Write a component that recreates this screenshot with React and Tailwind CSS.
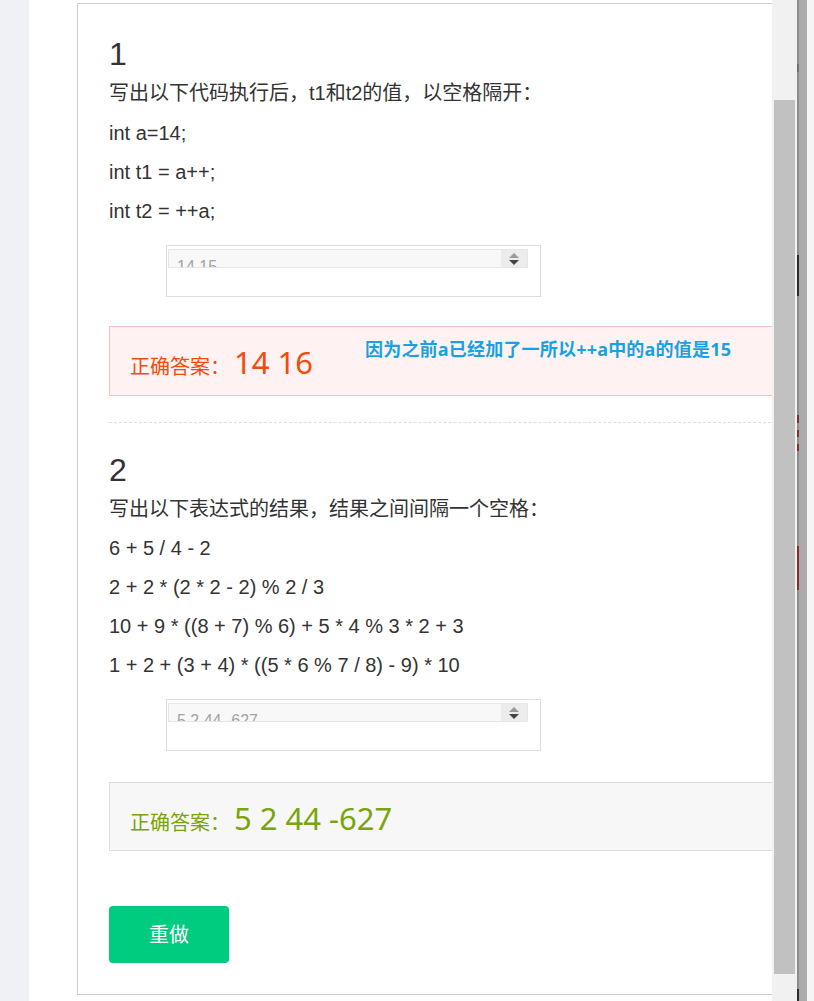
const questions = [
  {
    no: "1",
    title: "写出以下代码执行后，t1和t2的值，以空格隔开：",
    lines: ["int a=14;", "int t1 = a++;", "int t2 = ++a;"],
    firstGap: "mt-[10px]",
    input: "14 15",
    answer: "14 16",
    wrong: true,
    gap: "mt-[29px] h-[70px]",
    note: "因为之前a已经加了一所以++a中的a的值是15",
  },
  {
    no: "2",
    title: "写出以下表达式的结果，结果之间间隔一个空格：",
    lines: [
      "6 + 5 / 4 - 2",
      "2 + 2 * (2 * 2 - 2) % 2 / 3",
      "10 + 9 * ((8 + 7) % 6) + 5 * 4 % 3 * 2 + 3",
      "1 + 2 + (3 + 4) * ((5 * 6 % 7 / 8) - 9) * 10",
    ],
    firstGap: "mt-[9px]",
    input: "5 2 44 -627",
    answer: "5 2 44 -627",
    gap: "mt-[31px] h-[69px]",
    wrong: false,
  },
];

const font = "font-['Liberation_Sans','Noto_Sans_CJK_SC',sans-serif]";
const cjk = "font-['Noto_Sans','Noto_Sans_CJK_SC',sans-serif]";

function AnswerInput({ value }) {
  return (
    <div className="ml-[57px] mt-[19px] h-[52px] w-[375px] border border-[#dddddd] bg-white px-px pt-[3px]">
      <div className="relative h-[19px] w-[360px] overflow-hidden border border-[#e6e6e6] bg-[#f8f8f8]">
        <div className={`${font} pl-[8px] pt-[7px] text-[16px] leading-[20px] text-[#a3a3a3]`}>
          {value}
        </div>
        <div className="absolute right-0 top-0 flex h-full w-[26px] flex-col items-center justify-center gap-[2px] bg-[#ececec]">
          <div className="h-0 w-0 border-x-[5px] border-b-[5px] border-x-transparent border-b-[#9a9a9a]" />
          <div className="h-0 w-0 border-x-[5px] border-t-[5px] border-x-transparent border-t-[#444]" />
        </div>
      </div>
    </div>
  );
}

function Result({ q }) {
  const box = q.wrong
    ? "border-[#f3c1c1] bg-[#fff2f2] text-[#f24c0d]"
    : "border-[#dddddd] bg-[#f7f7f7] text-[#7aa40c]";
  return (
    <div className={`${q.gap} flex items-start border pl-[20px] pt-[10px] ${box}`}>
      <div className={`${cjk} mt-[5px] flex items-baseline`}>
        <span className="text-[20px] leading-[40px]">正确答案：</span>
        <span className="ml-[4px] text-[31px] leading-[40px]">{q.answer}</span>
      </div>
      {q.note && (
        <div className={`${cjk} ml-[52px] text-[18px] font-bold leading-[24px] tracking-[0.2px] text-[#16a2e3]`}>
          {q.note}
        </div>
      )}
    </div>
  );
}

function Question({ q }) {
  return (
    <div className={`${font} text-[#333333]`}>
      <div className="text-[32px] leading-[38px]">{q.no}</div>
      <div className="mt-[5px] text-[20px] leading-[30px]">{q.title}</div>
      {q.lines.map((l, i) => (
        <div key={i} className={`${i === 0 ? q.firstGap : "mt-[9px]"} text-[20px] leading-[30px]`}>
          {l}
        </div>
      ))}
      <AnswerInput value={q.input} />
      <Result q={q} />
    </div>
  );
}

export default function App() {
  return (
    <div className="flex h-[1001px] w-[814px] overflow-hidden bg-white">
      <div className="w-[29px] shrink-0 bg-[#f0f1f5]" />
      <div className="w-[743px] shrink-0 overflow-hidden pt-[3px]">
        <div className="ml-[48px] h-[992px] w-[740px] border border-[#cccccc] pl-[31px] pr-[20px] pt-[31px]">
          <Question q={questions[0]} />
          <div className="mt-[26px] border-t border-dashed border-[#dddddd]" />
          <div className="mt-[28px]">
            <Question q={questions[1]} />
          </div>
          <button className={`${cjk} mt-[55px] h-[57px] w-[120px] rounded-[4px] bg-[#00cc7f] text-[20px] text-white`}>
            重做
          </button>
        </div>
      </div>
      <div className="w-[25px] shrink-0 bg-[#f1f1f1] px-[2px] pt-[100px]">
        <div className="h-[874px] w-[21px] bg-[#c1c1c1]" />
      </div>
      <div className="flex w-[2px] shrink-0 flex-col bg-[#8c8c8c]">
        <div className="mt-[64px] h-[8px] bg-[#707070]" />
        <div className="mt-[183px] h-[41px] bg-[#2b2b2b]" />
        <div className="mt-[119px] h-[8px] bg-[#8e2a2a]" />
        <div className="mt-[7px] h-[8px] bg-[#8e2a2a]" />
        <div className="mt-[7px] h-[7px] bg-[#8e2a2a]" />
        <div className="mt-[95px] h-[44px] bg-[#8e2a2a]" />
        <div className="mt-[399px] h-[12px] bg-[#2b2b2b]" />
      </div>
      <div className="w-[8px] shrink-0 bg-[#ababab]" />
      <div className="flex-1 bg-[#f5f5f5]" />
    </div>
  );
}
